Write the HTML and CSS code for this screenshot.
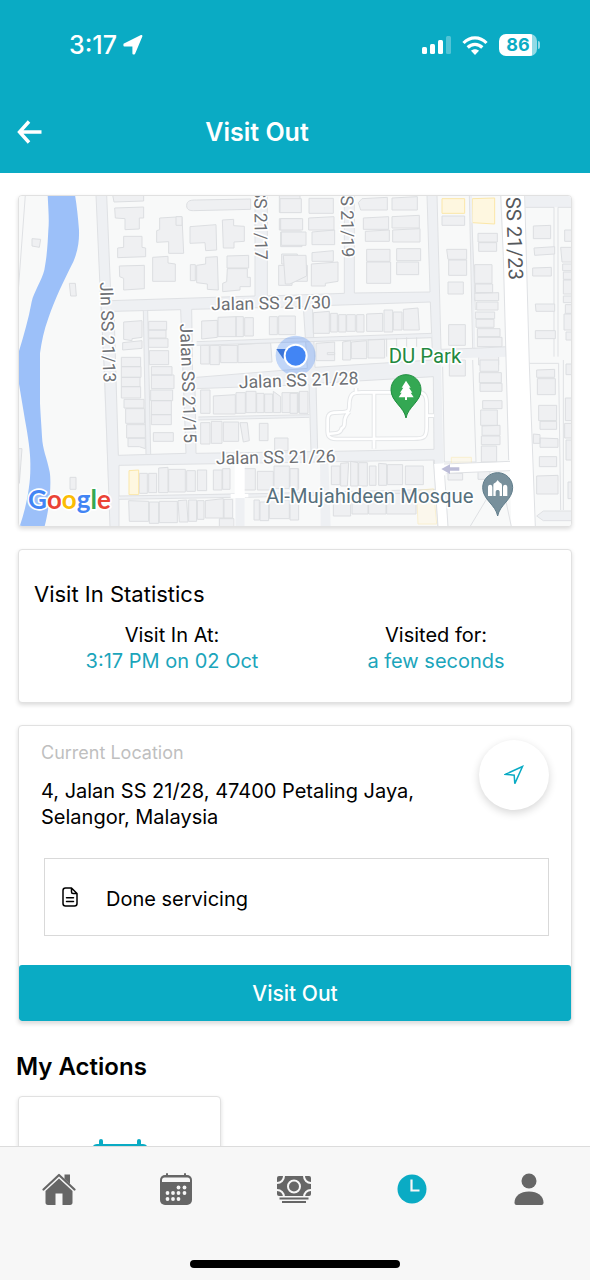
FILE: index.html
```html
<!DOCTYPE html>
<html lang="en">

<head>
    <meta charset="UTF-8">
    <meta name="viewport" content="width=device-width, initial-scale=1.0">
    <title>Visit Out</title>

    <link rel="stylesheet" href="styles.css">
</head>

<body>
    <header class="header">
        <div class="statusBar">
            <div class="statusLeft">
                <span class="clock">3:17</span>
                <svg width="20" height="20" viewBox="0 0 20 20" fill="#fff" stroke="#fff" stroke-linejoin="round">
                    <path d="M18.4 1L11.2 18.4 10.4 18.4V10.6H1.4V9.400z" stroke-width="2" />
                </svg>
            </div>
            <div class="statusRight">
                <svg width="29" height="18" viewBox="0 0 29 18" fill="#fff">
                    <rect x="0" y="11" width="5" height="7" rx="1.5" />
                    <rect x="8" y="8" width="5" height="10" rx="1.5" />
                    <rect x="16" y="4" width="5" height="14" rx="1.5" />
                    <rect x="24" y="0" width="5" height="18" rx="1.5" opacity=".3" />
                </svg>
                <svg width="26" height="19" viewBox="0 0 26 19" fill="none" stroke="#fff" stroke-width="3.2">
                    <path d="M1.5 7C8 .2 18 .2 24.5 7M5.7 11.5c4.2-4.2 10.4-4.2 14.6 0" />
                    <path d="M13 19l-4-4.2c2.4-2 5.6-2 8 0z" fill="#fff" stroke="none" />
                </svg>
                <div class="battery"><span class="batteryLevel">86</span><span class="batteryTip"></span></div>
            </div>
        </div>
        <div class="navBar">
            <button class="backButton" type="button" aria-label="Back">
                <svg width="25" height="24" viewBox="0 0 25 24" fill="none" stroke="#fff" stroke-width="3.4">
                    <path d="M24.5 12H3M12 1.5L2.5 12 12 22.5" />
                </svg>
            </button>
            <h1 class="title">Visit Out</h1>
        </div>
    </header>

    <main class="content">
        <section class="card">
            <svg class="map" viewBox="3 3 1656 990">
                <rect class="land" x="0" y="0" width="1662" height="996" />
                <!-- west side -->
                <g transform="translate(-24 -15)">
                    <path class="river" d="M113 15C115 60 118 90 115 120C113 160 112 190 103 240C96 270 72 305 65 335C55 390 40 440 25 490V570L45 690C55 745 62 790 61 830C62 880 50 950 28 1012H103C118 960 125 880 119 845C110 800 98 780 96 740C94 700 92 680 90 640V490C95 455 102 420 115 385C135 325 160 275 190 215C205 180 208 150 207 120C204 80 200 45 195 15Z" />
                    <path class="line" d="M46 15L25 300" />
                    <path class="road" d="M258 15H290L303 332L735 318V15H772V318L1003 310V15H1033V309L1260 306L1251 15H1281L1300 810L1303 840L350 828V1010H300L258 15Z" />
                    <path class="line" d="M258 15L270 290L283 540L300 1010M290 15L303 332L735 318V15M772 15V318L1003 310V15M1033 15V309L1260 306L1251 15" />
                </g>
                <!-- land between the streets -->
                <g transform="translate(-24 -15)" class="block">
                    <path d="M312 364L512 359L528 790L325 796Z" />
                    <path d="M545 358L880 350L892 535L548 563Z" />
                    <path d="M907 348L1261 336L1268 510L915 532Z" />
                    <path d="M555 596L897 584L903 785L558 790Z" />
                    <path d="M918 580L1270 560L1272 778L923 785Z" />
                    <path d="M327 826L1273 810L1284 1013H327Z" />
                </g>
                <g transform="translate(-24 -15)">
                    <path class="building" d="M308 15H401V33L312 36ZM314 54L401 51V84H388V117L345 119V86L316 84ZM341 139H396V172L407 174V200L323 203V174L341 172ZM328 228L403 226V296L341 300V265L329 260ZM428 202L474 199V219L496 222V274H428ZM449 84L516 80L521 190H476V155L440 157V122L449 119ZM540 110L618 104L620 180L587 182L585 158L540 160ZM637 90L671 88V107L703 109V154L672 156V174H640ZM651 198L716 196V234H651ZM587 202L622 200L625 300L592 298V282L560 278V226L587 222ZM541 224H556V272H541ZM652 236H712V262H721V290H690V300L638 305V280L650 275Z" />
                    <path class="building" d="M530 47C530 30 545 30 560 30L722 27V58L550 62C540 62 530 60 530 47ZM498 80H516V106H498ZM808 17H870V67H808ZM808 86H872V120H808ZM812 126H876V170H812ZM815 192H862V222H815ZM806 226H892V274H846V286H806Z" />
                    <path class="building" d="M341 396L396 392V442L366 446V452L341 448ZM338 458L396 452V475L338 480ZM334 502H392V530H334ZM334 530H393V562H334ZM334 562H390V590H334ZM334 590H392V624H334ZM342 628H402V654H342ZM347 656H404V700H347ZM350 704H406V744H350ZM354 744H406V776L388 770H354ZM416 394H470V420H416ZM416 420H468V444H416ZM416 446H474V472H416ZM418 482H476V524H418ZM424 530H486V555H424ZM424 555H492V596H424ZM422 600H488V632H422ZM424 632H484V674H424ZM424 674H484V704H424ZM430 728H490V754H430Z" />
                    <path class="building" d="M575 393L622 391V442L575 447ZM624 382L678 380V440H624ZM678 380H700V440H678ZM704 383H730V438H704ZM778 380H802V434H778ZM806 378H856V434H806ZM572 466H598V522H572ZM600 466H628V524H600ZM632 466H682V518H632ZM684 464L782 458L786 516L684 518Z" />
                    <path class="building" d="M572 600H600V670H572ZM610 618L676 614V672H610ZM678 608H706V670H678ZM708 604H738V668H708ZM740 610H762V668H740ZM764 612H788V668H764ZM790 604L812 620V668H790ZM816 608H864V668H816ZM866 608H888V668H866ZM572 698H600V762H572ZM604 694H636V760H604ZM640 696H686V754H640ZM690 698H712L718 752L700 756ZM748 700H774V752H748ZM794 744H834V782H794Z" />
                    <path class="building" d="M388 850H412V910H388ZM416 850H440V908H416ZM446 834L474 832V908H446ZM476 838H526V906H476ZM530 842H556V904H530ZM562 840H590V902H562ZM610 840H636V900H610ZM638 836H660V898H638ZM694 836H736V900H694ZM742 844H790V900H742ZM792 828H838V896H792ZM840 836H866V896H840ZM356 932L416 934V994H358ZM418 936H446V1000H418ZM448 934H502V998H448ZM504 932L530 930L534 996H508ZM536 930H560V994H536ZM562 932H582V988H562ZM586 932L640 926V984H586ZM642 928H668V984H642ZM628 986H672V1010H628ZM732 930H748V990H732ZM750 936H776V992H750ZM778 930H838V986H778ZM840 932H866V990H840Z" />
                    <path class="shop" d="M357 842L386 840V914H357Z" />
                    <path class="building" d="M66 146L92 148L88 172L66 168ZM178 280H196L199 318H182ZM180 862H198V898H180ZM25 776H36L28 880Z" />
                    <path class="road" d="M400 362H413L422 792H408ZM560 455L1265 430V443L560 466ZM565 681L898 674V682L565 690ZM327 918L1280 898V908L327 928Z" />
                    <path class="line" d="M400 362L408 794M413 360L422 792M327 918L674 912M327 928L674 922M704 912L1279 898M704 922L1280 908M560 455L1265 430M560 466L1265 443M565 681L898 674M565 690L898 682" />
                    <path class="whiteFill" d="M674 822L704 821V912H715V922H704V1010H674V924H662V912H674Z" />
                    <path class="road" d="M676 924H704V1010H676Z" />
                    <path class="road" d="M930 808H955L962 1010H932Z" />
                </g>
                <!-- north east -->
                <g transform="translate(816 -15)">
                    <path class="building" d="M-30 26H34V68H-30ZM57 25H130V70H57ZM-28 86H38V120H-28ZM56 84L132 80V120H56ZM-26 126H48V166H-26ZM66 126L134 120V164H66ZM66 188L130 182V214H66ZM64 222L144 216V274L106 280V288H64ZM-20 196H48L50 258L0 282H-14ZM205 38L216 26L292 22V60H212ZM306 24L382 20V60H306ZM220 84L296 80V118H220ZM306 80L388 76V114H306ZM226 124L298 120V154H226ZM308 120L390 116V156H308ZM230 178H300V214H230ZM320 176H392V212H320ZM230 216H302V280H230ZM320 216H386V254H320Z" />
                    <path class="building" d="M70 368L118 364V430H70ZM122 370H142V426H122ZM146 374H168V426H146ZM170 374H196V424H170ZM200 374H222V426H200ZM230 372L278 370V424H230ZM282 360H308V426H282ZM310 366H336V420H310ZM340 358L384 354L388 420H340ZM78 460L134 456V512H78ZM158 456L182 452V510H158ZM184 456L230 452V506H184ZM234 450L284 448V504H234ZM112 488H134V494H112ZM290 446V500M320 444V490M350 442V480M380 442V470" />
                    <path class="building" d="M456 78H524V106H456ZM470 178H530V208H474ZM476 210H530V256H476ZM474 276H520V312H474ZM476 404H526V466H476ZM564 130H622V156H564ZM566 158H620V184H566ZM554 224H606V280H554ZM556 282H608V308H556ZM550 310L626 308V332H554ZM560 336H624V360H560ZM556 366H614V386H556ZM558 388H612V412H558ZM562 416H630V440H562ZM562 442H636V470H562ZM566 494H626V525H566Z" />
                    <path class="shop" d="M456 26H524V70H456ZM547 26L614 24V102L547 98Z" />
                    <path class="road" d="M706 15H844V52H706ZM444 480L650 470V500L450 506ZM538 15H546L556 480H550Z" />
                    <path class="line" d="M441 15L453 478L548 475M538 15L548 475L654 470M546 98L556 360M706 52H792V500M804 500V52H844" />
                    <path class="building" d="M730 108L782 106V146H730ZM732 174L794 170V192L734 196ZM728 234L784 232V258H728ZM736 342H794V364H738ZM736 422H796V446H736ZM824 120H850V154H824ZM812 172H850V216H816ZM818 222H850V242H818ZM820 246H850V268H820ZM820 270H850V312H820ZM820 318H850V338H820ZM826 344H850V370H826ZM822 372H850V420H822ZM828 426H850V450H828Z" />
                    <path class="whiteFill" d="M636 15H704L718 525L736 1010H664L658 810L640 200Z" />
                    <path class="line" d="M632 15L640 200L656 810M704 15L718 525L736 1010" />
                </g>
                <!-- south east -->
                <g transform="translate(816 495)">
                    <path class="building" d="M0 100H22V160H0ZM28 94H54V160H28ZM478 0H526V48H478ZM570 0H626V34H570ZM568 38H634V68H568ZM570 70H636V94H570ZM578 122H636V146H578ZM572 150H622V196H572ZM576 198L630 196V226H576ZM574 228H630V254H574ZM574 258H620V306H574ZM124 318H150V374H124ZM152 310L176 308L172 378H152ZM182 304L204 308V378H182ZM206 308H232V378H206ZM238 318H258V376H238ZM266 310L290 312V376H266ZM292 314H338V374H292ZM346 318H400V374H346ZM0 326H24V390H0ZM130 404H182V468H130ZM186 402H234V462H186ZM236 402H288V462H236ZM290 400H378V462H290ZM474 340H518V360H474ZM564 332L600 334V358H564Z" />
                    <path class="building" d="M740 30L794 28V52H740ZM742 56H796V104H742ZM746 136H800V182H746ZM750 184H800V208H750ZM730 222L750 224V250H730ZM750 234L804 236V262H750ZM748 290H800V320H748ZM740 348L804 346V402H740ZM828 12H850V44H828ZM826 114H850V182H826ZM824 190H850V234H824ZM828 240H850V300H828ZM834 366H850V416H834Z" />
                    <path class="road" d="M760 453H850V482H760L740 468Z" />
                    <path class="line" d="M850 453H760L740 468L760 482H850M458 20L463 306L558 306L548 0M718 10H806V30L812 450M820 0V450" />
                    <path class="shop faint" d="M484 292H544V310H484ZM380 392L430 386L440 492H384Z" />
                    <path class="whiteFill" d="M432 312L464 310L660 306V334L466 340L472 500H444Z" />
                    <path class="line" d="M462 312L660 304M470 340L660 332M464 346L474 500M430 300L444 500M600 400L540 500M645 410L664 500" />
                    <!-- park paths -->
                    <path class="pathEdge" d="M178 130C180 95 195 97 220 97H385C405 97 410 110 410 130V200C410 235 400 236 370 236L140 237C112 236 112 225 113 200V180C113 158 125 157 150 157C180 157 178 150 178 130M252 97V266M410 167H432M178 155C150 180 175 195 155 205C150 225 130 218 114 222M198 97V84" />
                    <path class="pathInner" d="M178 130C180 95 195 97 220 97H385C405 97 410 110 410 130V200C410 235 400 236 370 236L140 237C112 236 112 225 113 200V180C113 158 125 157 150 157C180 157 178 150 178 130M252 97V266M410 167H432M178 155C150 180 175 195 155 205C150 225 130 218 114 222M198 97V84" />
                    <path class="arrow" d="M454 327L480 313V322H508V332H480V342Z" />
                    <path d="M348 174C342 140 303 125 303 89C303 64 323 44 348 44C373 44 393 64 393 89C393 125 354 140 348 174Z" fill="#34a853" stroke="#1e8e3e" stroke-width="3" />
                    <path d="M348 62L362 83H357L367 98H362L371 112H351V120H345V112H326L335 98H330L340 83H335Z" fill="#fff" />
                    <path d="M623 468C617 434 578 419 578 383C578 358 598 338 623 338C648 338 668 358 668 383C668 419 629 434 623 468Z" fill="#78909c" stroke="#607d8b" stroke-width="3" />
                    <path d="M594 408V382C594 372 607 372 607 382V408ZM639 408V382C639 372 652 372 652 382V408ZM610 408V376C610 368 618 370 623 360C628 370 636 368 636 376V408H629V396C629 388 617 388 617 396V408Z" fill="#fff" />
                </g>
                <!-- current position -->
                <circle cx="833" cy="482" r="60" fill="#4285f4" opacity=".3" />
                <path d="M775 462L812 462L796 492Z" fill="#3a74d8" />
                <circle cx="833" cy="482" r="36" fill="#fff" />
                <circle cx="833" cy="482" r="30" fill="#4285f4" />
                <g class="streetName">
                    <text x="580" y="346" transform="rotate(-1 580 346)">Jalan SS 21/30</text>
                    <text x="663" y="580" transform="rotate(-2 663 580)">Jalan SS 21/28</text>
                    <text x="594" y="808" transform="rotate(-1 594 808)">Jalan SS 21/26</text>
                    <text x="246" y="262" transform="rotate(88 246 262)">Jln SS 21/13</text>
                    <text x="486" y="386" transform="rotate(88 486 386)">Jalan SS 21/15</text>
                    <text x="708" y="-22" transform="rotate(89 708 -22)">SS 21/17</text>
                    <text x="968" y="-30" transform="rotate(89 968 -30)">SS 21/19</text>
                    <text class="mainStreet" x="1464" y="6" transform="rotate(88 1464 6)">SS 21/23</text>
                </g>
                <text class="placeName park" x="1112" y="504">DU Park</text>
                <text class="placeName mosque" x="744" y="923">Al-Mujahideen Mosque</text>
                <text class="googleLogo" x="30" y="942"><tspan fill="#4285f4">G</tspan><tspan fill="#ea4335">o</tspan><tspan fill="#fbbc04">o</tspan><tspan fill="#4285f4">g</tspan><tspan fill="#34a853">l</tspan><tspan fill="#ea4335">e</tspan></text>
            </svg>
        </section>

        <section class="card statistics">
            <h2 class="cardTitle">Visit In Statistics</h2>
            <div class="statRow">
                <div class="stat">
                    <div>Visit In At:</div>
                    <div class="statValue">3:17 PM on 02 Oct</div>
                </div>
                <div class="stat">
                    <div>Visited for:</div>
                    <div class="statValue">a few seconds</div>
                </div>
            </div>
        </section>

        <section class="card">
            <div class="location">
                <div class="address">
                    <div class="addressLabel">Current Location</div>
                    <div>4, Jalan SS 21/28, 47400 Petaling Jaya, Selangor, Malaysia</div>
                </div>
                <button class="locateButton" type="button" aria-label="Locate">
                    <svg width="20" height="20" viewBox="0 0 20 20" fill="none" stroke="#0aabc4" stroke-width="1.5">
                        <path d="M18.500 1.5L1.5 9.300 10.2 10.2 10.8 18.6Z" />
                    </svg>
                </button>
            </div>
            <label class="note">
                <svg width="16" height="20" viewBox="0 0 16 20" fill="none" stroke="#000" stroke-width="1.5" stroke-linejoin="round" stroke-linecap="round">
                    <path d="M9.5 1H3.5C2 1 1 2 1 3.5v13C1 18 2 19 3.5 19h9c1.5 0 2.5-1 2.5-2.5V6.5zM9.5 1v4c0 1 .5 1.5 1.5 1.5h4M4.5 10.7h7M4.5 14.5h7" />
                </svg>
                <input class="noteInput" type="text" value="Done servicing" aria-label="Note">
            </label>
            <button class="visitButton" type="button">Visit Out</button>
        </section>

        <h2 class="sectionTitle">My Actions</h2>
        <div class="actions">
            <button class="card action" type="button" aria-label="Calendar">
                <svg width="60" height="60" viewBox="0 0 60 60" fill="#0aabc4">
                    <path d="M7 5H53C57 5 59 9 59 14V50C59 56 56 59 50 59H10C4 59 1 56 1 50V14C1 9 3 5 7 5Z" />
                    <rect x="9" y="0" width="4" height="10" rx="2" />
                    <rect x="47" y="0" width="4" height="10" rx="2" />
                </svg>
            </button>
        </div>
    </main>

    <footer class="footer">
        <nav class="tabBar">
            <a class="tab" href="#home" aria-label="Home">
                <svg width="34" height="32" viewBox="0 0 34 32" fill="#666">
                    <path d="M1.5 16.5L17 2 32.5 16.5" fill="none" stroke="#666" stroke-width="2.2" stroke-linecap="round" stroke-linejoin="round" />
                    <path d="M22.5 1.5H28V11l-5.5-5z" />
                    <path d="M17 5.5L30.5 18v11.500c0 1.500-.8 2.500-2.500 2.500h-7.500V20.500h-7V32H6c-1.700 0-2.500-1-2.500-2.500V18z" />
                </svg>
            </a>
            <a class="tab" href="#calendar" aria-label="Calendar">
                <svg width="32" height="32" viewBox="0 0 32 32" fill="#666">
                    <rect x="0" y="2" width="32" height="30" rx="5" />
                    <rect x="6" y="0" width="2" height="5" rx="1" />
                    <rect x="24" y="0" width="2" height="5" rx="1" />
                    <path d="M2 9V7C2 5.500 3 4.500 4.500 4.500h23C29 4.500 30 5.500 30 7v2z" fill="#f7f7f7" />
                    <g fill="#f7f7f7">
                        <circle cx="18.5" cy="14.5" r="1.9" />
                        <circle cx="24.5" cy="14.5" r="1.9" />
                        <circle cx="7.5" cy="20" r="1.9" />
                        <circle cx="13" cy="20" r="1.9" />
                        <circle cx="18.5" cy="20" r="1.9" />
                        <circle cx="24.5" cy="20" r="1.9" />
                        <circle cx="7.5" cy="26" r="1.9" />
                        <circle cx="13" cy="26" r="1.9" />
                        <circle cx="18.5" cy="26" r="1.9" />
                    </g>
                </svg>
            </a>
            <a class="tab" href="#claims" aria-label="Claims">
                <svg width="34" height="27" viewBox="0 0 34 27" fill="#666">
                    <rect x="0" y="0" width="34" height="20" rx="2" />
                    <g fill="none" stroke="#f7f7f7" stroke-width="2">
                        <circle cx="17" cy="10.5" r="6" />
                        <path d="M0 7C4 7 7 4 7 0M27 0c0 4 3 7 7 7M0 14c4 0 7 3 7 7M34 14c-4 0-7 3-7 7" />
                    </g>
                    <rect x="2.5" y="21.5" width="29" height="2" />
                    <rect x="5" y="25" width="24" height="2" />
                </svg>
            </a>
            <a class="tab" href="#visits" aria-label="Visits">
                <svg width="30" height="30" viewBox="0 0 30 30">
                    <circle cx="15" cy="15" r="14.5" fill="#0aabc4" />
                    <path d="M14.5 5.5v11h8" fill="none" stroke="#f7f7f7" stroke-width="2.2" />
                </svg>
            </a>
            <a class="tab" href="#profile" aria-label="Profile">
                <svg width="30" height="32" viewBox="0 0 30 32" fill="#666">
                    <circle cx="15" cy="8" r="7.5" />
                    <path d="M.5 29.5C.5 23 6.5 18.5 15 18.5S29.5 23 29.5 29.5c0 1.5-.5 2.5-2 2.5h-25C1 32 .5 31 .5 29.5z" />
                </svg>
            </a>
        </nav>
        <div class="homeIndicator"></div>
    </footer>
</body>

</html>
```
FILE: styles.css
```css
body {
    margin: 0;
    height: 100vh;
    display: flex;
    flex-direction: column;
    overflow: hidden;
    background-color: white;
    color: black;
    font-family: Inter, "Liberation Sans", sans-serif;
    font-size: 20px;
    line-height: 26px;
}

button {
    border: none;
    padding: 0;
    font-family: inherit;
    cursor: pointer;
}

h1,
h2 {
    margin: 0;
}

svg {
    display: block;
}

/* header */
.header {
    flex: none;
    background-color: #0aabc4;
    color: white;
}

.statusBar {
    height: 90px;
    padding: 0 50px 0 69px;
    display: flex;
    align-items: center;
    justify-content: space-between;
}

.statusLeft {
    display: flex;
    align-items: center;
    gap: 6px;
}

.clock {
    font-size: 25px;
    font-weight: 500;
}

.statusRight {
    display: flex;
    align-items: center;
    gap: 11px;
}

.battery {
    display: flex;
    align-items: center;
    gap: 1px;
}

.batteryLevel {
    width: 38px;
    border-radius: 7px;
    background: linear-gradient(to right, white 86%, #91dae5 86%);
    color: #0aabc4;
    font-size: 18px;
    font-weight: 700;
    line-height: 22px;
    text-align: center;
}

.batteryTip {
    width: 2px;
    height: 8px;
    border-radius: 0 2px 2px 0;
    background-color: #91dae5;
}

.navBar {
    height: 83px;
    display: grid;
    grid-template-columns: 42px 1fr 118px;
    align-items: center;
}

.backButton {
    padding-left: 17px;
    background: none;
}

.title {
    font-size: 25px;
    font-weight: 600;
    text-align: center;
}

/* content */
.content {
    flex: 1;
    min-height: 0;
    padding: 22px 18px 0;
    display: flex;
    flex-direction: column;
    gap: 22px;
    overflow-y: auto;
    scrollbar-width: none;
}

.card {
    flex: none;
    border: 1px solid #e1e1e1;
    border-radius: 4px;
    background-color: white;
    box-shadow: 0 2px 4px rgba(0, 0, 0, 0.14);
    overflow: hidden;
}

/* map */
.map {
    width: 100%;
    height: auto;
}

.land,
.block {
    fill: #f8f9f9;
}

.block {
    stroke: #dfe1e4;
    stroke-width: 3;
}

.river {
    fill: #9cc0f9;
}

.road {
    fill: #eef0f3;
}

.line {
    fill: none;
    stroke: #dfe1e4;
    stroke-width: 3;
}

.building {
    fill: #eff0f2;
    stroke: #dcdee1;
    stroke-width: 3;
}

.shop {
    fill: #fef7e0;
    stroke: #fbe7a8;
    stroke-width: 3;
}

.faint {
    opacity: 0.5;
}

.whiteFill {
    fill: white;
}

.pathEdge {
    fill: none;
    stroke: #e4e6e8;
    stroke-width: 14;
}

.pathInner {
    fill: none;
    stroke: white;
    stroke-width: 8;
}

.arrow {
    fill: #bdbdd8;
}

.map text {
    font-family: Roboto, sans-serif;
    paint-order: stroke;
    stroke: white;
    stroke-width: 10;
    stroke-linejoin: round;
}

.streetName {
    fill: #6d7074;
    font-size: 53px;
}

.mainStreet {
    fill: #55585c;
    font-size: 61px;
}

.placeName {
    font-size: 61px;
}

.park {
    fill: #23893f;
}

.mosque {
    fill: #56707c;
}

.map .googleLogo {
    font-family: Lato, sans-serif;
    font-size: 78px;
    font-weight: 700;
}

/* statistics */
.statistics {
    padding: 31px 3px 28px 15px;
}

.cardTitle {
    font-size: 22px;
    font-weight: 400;
}

.statRow {
    display: flex;
    margin: 15px 0 0 6px;
}

.stat {
    flex: 1;
    text-align: center;
}

.statValue {
    color: #1ba5bb;
}

/* location */
.location {
    padding: 14px 22px 0;
    display: flex;
    align-items: flex-start;
    justify-content: space-between;
}

.address {
    max-width: 400px;
}

.addressLabel {
    margin-bottom: 12px;
    color: #bfbfbf;
    font-size: 18px;
}

.locateButton {
    width: 70px;
    height: 70px;
    border-radius: 50%;
    background-color: white;
    box-shadow: 0 3px 8px rgba(0, 0, 0, 0.16);
    display: flex;
    align-items: center;
    justify-content: center;
}

.note {
    height: 76px;
    margin: 28px 22px 29px 25px;
    padding-left: 17px;
    border: 1px solid #d9d9d9;
    display: flex;
    align-items: center;
    gap: 28px;
}

.noteInput {
    flex: 1;
    min-width: 0;
    height: 50px;
    border: none;
    padding: 4px 0 0;
    outline: none;
    background: none;
    color: black;
    font-family: inherit;
    font-size: 20px;
}

.visitButton {
    display: block;
    width: 100%;
    height: 56px;
    border-radius: 3px;
    background-color: #0aabc4;
    color: white;
    font-size: 21px;
    font-weight: 500;
}

/* actions */
.sectionTitle {
    margin: 10px 0 -6px -2px;
    font-size: 24px;
    font-weight: 600;
}

.actions {
    display: flex;
}

.action {
    width: 203px;
    height: 180px;
    display: flex;
    justify-content: center;
    padding-top: 42px;
}

/* footer */
.footer {
    flex: none;
    height: 133px;
    border-top: 1px solid #dcdcdc;
    background-color: #f7f7f7;
    display: flex;
    flex-direction: column;
    align-items: center;
    justify-content: space-between;
}

.tabBar {
    width: 100%;
    height: 84px;
    padding-right: 2px;
    box-sizing: border-box;
    display: flex;
}

.tab {
    flex: 1;
    display: flex;
    align-items: center;
    justify-content: center;
}

.homeIndicator {
    width: 210px;
    height: 8px;
    margin-bottom: 12px;
    border-radius: 4px;
    background-color: black;
}
```
